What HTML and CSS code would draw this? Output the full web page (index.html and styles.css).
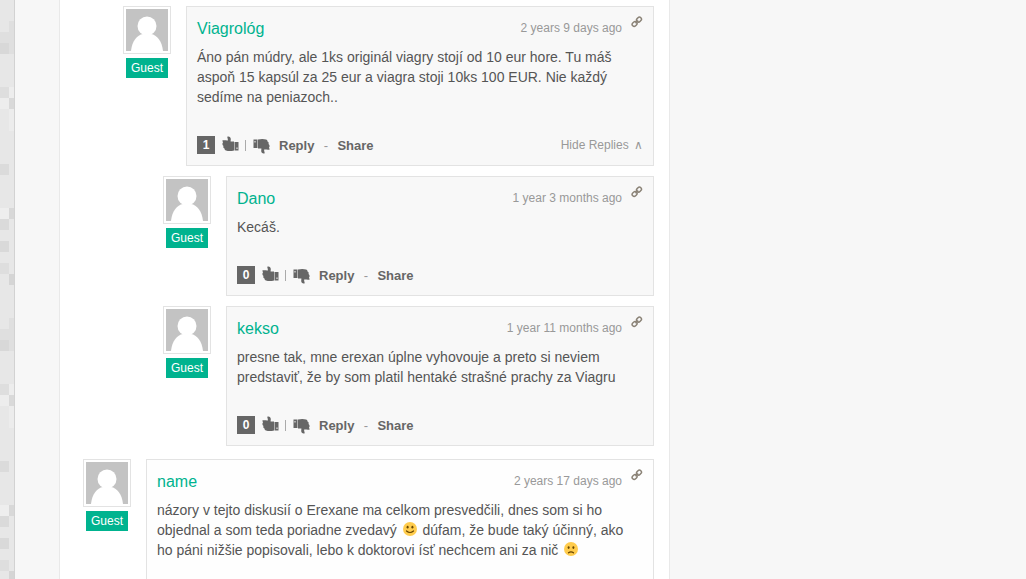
FILE: index.html
```
<!DOCTYPE html>
<html lang="sk">
<head>
  <meta charset="UTF-8" />
  <meta name="viewport" content="width=device-width, initial-scale=1.0" />
  <title>Diskusia</title>
  <link rel="stylesheet" href="styles.css">
</head>
<body>

<!-- shared icons -->
<svg class="sprite" aria-hidden="true">
  <symbol id="avatar" viewBox="0 0 42 42">
    <rect width="42" height="42" fill="#c3c3c3"/>
    <circle cx="21" cy="17" r="9.5" fill="#fff"/>
    <path d="M5 42C6 32 11 26 17 25h8c6 1 11 7 12 17z" fill="#fff"/>
  </symbol>
  <symbol id="thumb" viewBox="0 0 17 16">
    <path d="M5.500 0.500C7.500 0 8.800 1.500 8.800 3L8.600 5.500H12V14.500C9 15.300 6 15.200 4 14.500 3 14.200 2.500 13.500 2.500 12.500 1.300 12 1 11 1.500 10 0.300 9.300 0 7.500 1 6.500L0.300 4.500C2.500 4 4.500 4.800 5.800 4.500 6.300 3 4.800 1.500 5.500 0.500z"/>
    <path d="M12.500 6h4v8.500h-4zM14.500 11.500v1.500h1v-1.500z" fill-rule="evenodd"/>
  </symbol>
  <symbol id="chain" viewBox="0 0 12 12">
    <g fill="none" stroke="#8b8377" stroke-width="1.500">
      <rect x="-2.600" y="-2" width="5.200" height="4" rx="2" transform="translate(3.600 8) rotate(-45)"/>
      <rect x="-2.600" y="-2" width="5.200" height="4" rx="2" transform="translate(8 3.600) rotate(-45)"/>
      <path d="M4.500 7.200L7.200 4.500"/>
    </g>
  </symbol>
  <symbol id="smile" viewBox="0 0 14 14">
    <circle cx="7" cy="7" r="7" fill="#ffcc4d"/>
    <ellipse cx="4.600" cy="5.200" rx="1" ry="1.400" fill="#664500"/>
    <ellipse cx="9.400" cy="5.200" rx="1" ry="1.400" fill="#664500"/>
    <path d="M3.500 9Q7 12 10.500 9" fill="none" stroke="#664500" stroke-width="1.200" stroke-linecap="round"/>
  </symbol>
  <symbol id="frown" viewBox="0 0 14 14">
    <circle cx="7" cy="7" r="7" fill="#ffcc4d"/>
    <ellipse cx="4.600" cy="5.600" rx="1" ry="1.400" fill="#664500"/>
    <ellipse cx="9.400" cy="5.600" rx="1" ry="1.400" fill="#664500"/>
    <path d="M4.500 10.800Q7 8.800 9.500 10.800" fill="none" stroke="#664500" stroke-width="1.200" stroke-linecap="round"/>
  </symbol>
</svg>

<div class="page">
  <main class="comments">

    <article class="comment level-2">
      <div class="author">
        <svg class="avatar"><use href="#avatar"/></svg>
        <span class="label">Guest</span>
      </div>
      <div class="card">
        <header>
          <h3>Viagrológ</h3>
          <time>2 years 9 days ago</time>
          <a class="permalink" href="#c1" aria-label="Link"><svg><use href="#chain"/></svg></a>
        </header>
        <p>Áno pán múdry, ale 1ks originál viagry stojí od 10 eur hore. Tu máš aspoň 15 kapsúl za 25 eur a viagra stoji 10ks 100 EUR. Nie každý sedíme na peniazoch..</p>
        <footer>
          <span class="score">1</span>
          <button class="vote" aria-label="Vote up"><svg><use href="#thumb"/></svg></button>
          <span class="bar"></span>
          <button class="vote down" aria-label="Vote down"><svg><use href="#thumb"/></svg></button>
          <button class="action">Reply</button>
          <span class="dash">-</span>
          <button class="action">Share</button>
          <button class="toggle">Hide Replies <span class="caret">∧</span></button>
        </footer>
      </div>
    </article>

    <article class="comment level-3">
      <div class="author">
        <svg class="avatar"><use href="#avatar"/></svg>
        <span class="label">Guest</span>
      </div>
      <div class="card">
        <header>
          <h3>Dano</h3>
          <time>1 year 3 months ago</time>
          <a class="permalink" href="#c2" aria-label="Link"><svg><use href="#chain"/></svg></a>
        </header>
        <p>Kecáš.</p>
        <footer>
          <span class="score">0</span>
          <button class="vote" aria-label="Vote up"><svg><use href="#thumb"/></svg></button>
          <span class="bar"></span>
          <button class="vote down" aria-label="Vote down"><svg><use href="#thumb"/></svg></button>
          <button class="action">Reply</button>
          <span class="dash">-</span>
          <button class="action">Share</button>
        </footer>
      </div>
    </article>

    <article class="comment level-3">
      <div class="author">
        <svg class="avatar"><use href="#avatar"/></svg>
        <span class="label">Guest</span>
      </div>
      <div class="card">
        <header>
          <h3>kekso</h3>
          <time>1 year 11 months ago</time>
          <a class="permalink" href="#c3" aria-label="Link"><svg><use href="#chain"/></svg></a>
        </header>
        <p>presne tak, mne erexan úplne vyhovouje a preto si neviem predstaviť, že by som platil hentaké strašné prachy za Viagru</p>
        <footer>
          <span class="score">0</span>
          <button class="vote" aria-label="Vote up"><svg><use href="#thumb"/></svg></button>
          <span class="bar"></span>
          <button class="vote down" aria-label="Vote down"><svg><use href="#thumb"/></svg></button>
          <button class="action">Reply</button>
          <span class="dash">-</span>
          <button class="action">Share</button>
        </footer>
      </div>
    </article>

    <article class="comment level-1">
      <div class="author">
        <svg class="avatar"><use href="#avatar"/></svg>
        <span class="label">Guest</span>
      </div>
      <div class="card">
        <header>
          <h3>name</h3>
          <time>2 years 17 days ago</time>
          <a class="permalink" href="#c4" aria-label="Link"><svg><use href="#chain"/></svg></a>
        </header>
        <p>názory v tejto diskusií o Erexane ma celkom presvedčili, dnes som si ho objednal a som teda poriadne zvedavý <svg class="emoji"><use href="#smile"/></svg> dúfam, že bude taký účinný, ako ho páni nižšie popisovali, lebo k doktorovi ísť nechcem ani za nič <svg class="emoji"><use href="#frown"/></svg></p>
      </div>
    </article>

  </main>
</div>

</body>
</html>
```
FILE: styles.css
```
* {
  box-sizing: border-box;
}

body {
  margin: 0;
  padding-left: 14px;
  height: 100vh;
  overflow: hidden;
  font-family: "Liberation Sans", Arial, sans-serif;
  color: #555;
  background-color: #e7e7e7;
  /* tiles: wide left column, narrow right column */
  background-image:
    linear-gradient(transparent 32px, #dfdfdf 32px, #dfdfdf 43px, #d8d8d8 43px, #d8d8d8 54px, transparent 54px, transparent 87px, #dedede 87px, #dedede 98px, #ededed 98px, #ededed 109px, transparent 109px, transparent 164px, #dbdbdb 164px, #dbdbdb 175px, transparent 175px, transparent 208px, #eee 208px, #eee 219px, #dadada 219px, #dadada 230px, transparent 230px, transparent 241px, #d9d9d9 241px, #d9d9d9 252px, transparent 252px, transparent 263px, #dedede 263px, #dedede 274px, transparent 274px),
    linear-gradient(transparent 21px, #dfdfdf 21px, #dfdfdf 54px, transparent 54px, transparent 87px, #ededed 87px, #ededed 98px, #d9d9d9 98px, #d9d9d9 109px, #ececec 109px, #ececec 131px, transparent 131px, transparent 208px, #d8d8d8 208px, #d8d8d8 219px, transparent 219px, transparent 274px, #d5d5d5 274px, #d5d5d5 285px, transparent 285px);
  background-size: 9px 297px, 5px 297px;
  background-position: 0 0, 9px 0;
  background-repeat: repeat-y;
}

.sprite {
  display: none;
}

.page {
  display: grid;
  grid-template-columns: 611fr 356fr;
  height: 100vh;
  overflow: hidden;
  padding-left: 44px;
  background: #f7f7f7;
  border-left: 1px solid #d2d2d2;
}

.comments {
  padding: 6px 15px 0 23px;
  background: #fff;
  border-left: 1px solid #e9e9e9;
  border-right: 1px solid #e9e9e9;
}

.comment {
  display: flex;
  gap: 15px;
  margin-bottom: 10px;
}

.level-1 {
  margin-top: 13px;
}

.level-2 {
  margin-left: 40px;
}

.level-3 {
  margin-left: 80px;
}

.author {
  flex: none;
  text-align: center;
}

.avatar {
  display: block;
  width: 48px;
  height: 48px;
  padding: 2px;
  border: 1px solid #e3e3e3;
  background: #fff;
}

.label {
  display: inline-block;
  margin-top: 4px;
  padding: 0 5px;
  font-size: 12px;
  line-height: 20px;
  color: #fff;
  background: #00b38f;
}

.card {
  flex: 1;
  padding: 0 10px;
  border: 1px solid #e3e3e3;
  background: #f8f8f8;
}

.level-1 .card {
  min-height: 160px;
  background: #fefefe;
}

.card header {
  display: flex;
  align-items: center;
  height: 40px;
  padding-top: 2px;
}

h3 {
  flex: 1;
  margin: 2px 0 0;
  font-size: 16px;
  font-weight: normal;
  color: #00b38f;
}

time {
  font-size: 12px;
  color: #999;
}

.permalink {
  margin: 0 0 12px 9px;
}

.permalink svg {
  display: block;
  width: 12px;
  height: 12px;
}

.card p {
  margin: 0;
  padding-right: 12px;
  font-size: 14px;
  line-height: 20px;
}

.card footer {
  display: flex;
  align-items: center;
  height: 18px;
  margin: 29px 0 11px;
}

button {
  padding: 0;
  border: none;
  font-family: inherit;
  background: none;
  cursor: pointer;
}

.score {
  width: 18px;
  margin-right: 7px;
  font-size: 12px;
  font-weight: bold;
  line-height: 18px;
  text-align: center;
  color: #fff;
  background: #666;
}

.vote svg {
  display: block;
  width: 17px;
  height: 16px;
  margin-bottom: 3px;
  fill: #666;
}

.down svg {
  margin: 2px 0 0;
  transform: rotate(180deg);
}

.bar {
  width: 1px;
  height: 11px;
  margin: 0 7px 0 6px;
  background: #aaa;
}

.action {
  font-size: 13px;
  font-weight: bold;
  color: #666;
}

.down {
  margin-right: 9px;
}

.dash {
  width: 23px;
  font-size: 13px;
  text-align: center;
  color: #999;
}

.toggle {
  margin-left: auto;
  font-size: 12px;
  color: #999;
}

.caret {
  margin-left: 2px;
  font-size: 12px;
}

.emoji {
  width: 14px;
  height: 14px;
  margin: 0 2px;
  vertical-align: -1px;
}
```
